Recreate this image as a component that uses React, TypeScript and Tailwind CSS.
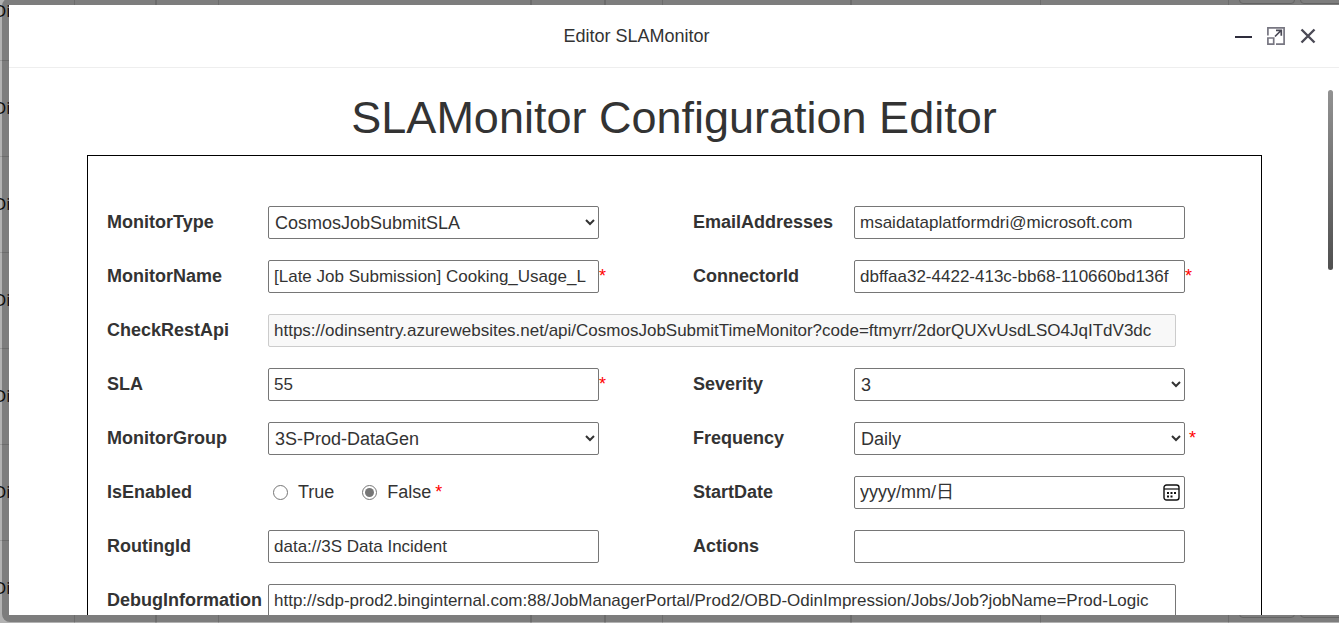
import { useState } from 'react';
import type { ReactNode } from 'react';
import clsx from 'clsx';

const columns = [
  'w-[74px] border-r',
  'w-[82px] border-r-2',
  'w-[62px] border-r',
  'w-[313px] border-r-2',
  'w-[74px] border-r-2',
  'w-[57px] border-r',
  'w-[189px] border-r-2',
  'w-[189px] border-r',
  'w-[188px] border-r',
];

const rows = [1, 2, 3, 4, 5, 6, 7];

const control = 'h-[33px] w-full min-w-0 rounded-[2px] border text-[#333]';

type FieldProps = {
  id: string;
  required?: boolean;
  spaced?: boolean;
  wide?: boolean;
  children: ReactNode;
};

const Field = ({ id, required, spaced, wide, children }: FieldProps) => (
  <div className={clsx('flex h-[33px] items-center pl-[19px]', wide && 'col-span-2')}>
    <label htmlFor={id} className="w-[161px] shrink-0 font-bold">
      {id}
    </label>
    <div className="relative flex min-w-0 flex-1 items-center">{children}</div>
    <span
      className={clsx('shrink-0 text-[#f00]', wide ? 'w-[84px]' : 'w-[75px]', spaced && 'pl-1')}
    >
      {required && '*'}
    </span>
  </div>
);

type TextProps = { id: string; value: string; disabled?: boolean };

const TextBox = ({ id, value, disabled }: TextProps) => (
  <input
    id={id}
    type="text"
    defaultValue={value}
    disabled={disabled}
    className={clsx(
      control,
      'px-[5px] text-[17px]',
      disabled ? 'border-[#ccc] bg-[#f8f8f8]' : 'border-[#767676] bg-white'
    )}
  />
);

const Select = ({ id, value }: TextProps) => (
  <select
    id={id}
    defaultValue={value}
    className={clsx(control, 'border-[#767676] bg-white px-[2px] text-[18px]')}
  >
    <option>{value}</option>
  </select>
);

const JobTable = () => (
  <table className="-mt-9 w-full min-w-[1339px] table-fixed border-collapse bg-white text-[#111]">
    <tbody>
      {rows.map((row) => (
        <tr key={row} className="h-24 border-b border-[#ddd]">
          {columns.map((column, i) => (
            <td key={i} className={clsx(column, 'overflow-hidden border-[#ddd]')}>
              {i === 0 && <span className="-ml-[6px] font-['Open_Sans',sans-serif] text-[17px]">Di</span>}
            </td>
          ))}
          <td className="pt-2 pl-[10px] align-top">
            <div className="grid grid-cols-[56px_56px] gap-x-[5px] gap-y-[5px]">
              {[1, 2, 3, 4].map((n) => (
                <span key={n} className="h-8 rounded border border-[#ccc]" />
              ))}
            </div>
          </td>
        </tr>
      ))}
    </tbody>
  </table>
);

const App = () => {
  const [enabled, setEnabled] = useState('False');

  return (
    <main className="h-screen overflow-hidden font-['Liberation_Sans',Arial,'Noto_Sans_CJK_SC',sans-serif] text-[18px] text-[#333]">
      <JobTable />
      <div className="fixed inset-0 bg-black/30" />

      <div
        role="dialog"
        aria-label="Editor SLAMonitor"
        className="fixed -top-[2px] bottom-px left-[2px] -right-[7px] flex flex-col rounded-lg bg-black/30 p-[7px]"
      >
        <header className="flex h-[63px] shrink-0 items-center border-b border-[#eee] bg-white pr-[22px] pl-[30px]">
          <h2 className="flex-1 text-center">Editor SLAMonitor</h2>
          <div className="flex items-center gap-[14px] text-[#2e2d3c]">
            <button type="button" aria-label="Minimize">
              <svg width="19" height="20" viewBox="0 0 19 20" className="block">
                <path d="M1 11h17" stroke="currentColor" strokeWidth="2" />
              </svg>
            </button>
            <button type="button" aria-label="Maximize">
              <svg width="18" height="20" viewBox="0 0 18 20" fill="none" className="block">
                <g stroke="#777681" strokeWidth="1.7">
                  <path d="M.9 9.5V1.9h16.2v16.2H9" />
                  <path d="M.9 12h5.8v6.1H.9z" />
                </g>
                <path d="M8 10.5l6-6M9 4.4h5.3v5.3" stroke="#4a4956" strokeWidth="1.7" />
              </svg>
            </button>
            <button type="button" aria-label="Close">
              <svg width="18" height="20" viewBox="0 0 18 20" fill="none" className="block">
                <path d="M2.5 3.5l13 13M15.5 3.5l-13 13" stroke="#4b4a56" strokeWidth="2.4" />
              </svg>
            </button>
          </div>
        </header>

        <div className="relative min-h-0 flex-1 bg-white">
          <div className="h-full overflow-y-auto [scrollbar-width:none]">
            <h1 className="pt-[25px] pb-[12px] text-center text-[45px] leading-[50px]">
              SLAMonitor Configuration Editor
            </h1>
            <form className="mr-[77px] ml-[78px] grid grid-cols-2 gap-y-[21px] border border-black pt-[50px] pr-px pb-12">
              <Field id="MonitorType">
                <Select id="MonitorType" value="CosmosJobSubmitSLA" />
              </Field>
              <Field id="EmailAddresses">
                <TextBox id="EmailAddresses" value="msaidataplatformdri@microsoft.com" />
              </Field>
              <Field id="MonitorName" required>
                <TextBox id="MonitorName" value="[Late Job Submission] Cooking_Usage_L" />
              </Field>
              <Field id="ConnectorId" required>
                <TextBox id="ConnectorId" value="dbffaa32-4422-413c-bb68-110660bd136f" />
              </Field>
              <Field id="CheckRestApi" wide>
                <TextBox
                  id="CheckRestApi"
                  value="https://odinsentry.azurewebsites.net/api/CosmosJobSubmitTimeMonitor?code=ftmyrr/2dorQUXvUsdLSO4JqITdV3dc"
                  disabled
                />
              </Field>
              <Field id="SLA" required>
                <TextBox id="SLA" value="55" />
              </Field>
              <Field id="Severity">
                <Select id="Severity" value="3" />
              </Field>
              <Field id="MonitorGroup">
                <Select id="MonitorGroup" value="3S-Prod-DataGen" />
              </Field>
              <Field id="Frequency" required spaced>
                <Select id="Frequency" value="Daily" />
              </Field>
              <Field id="IsEnabled">
                <div id="IsEnabled" role="radiogroup" className="flex items-center pl-[5px]">
                  {['True', 'False'].map((option) => (
                    <label key={option} className="mr-7 flex items-center gap-[10px] last-of-type:mr-1">
                      <input
                        type="radio"
                        name="enabled"
                        value={option}
                        checked={enabled === option}
                        onChange={() => setEnabled(option)}
                        className="size-[15px] accent-[#767676]"
                      />
                      {option}
                    </label>
                  ))}
                  <span className="text-[#f00]">*</span>
                </div>
              </Field>
              <Field id="StartDate">
                <input
                  id="StartDate"
                  type="text"
                  placeholder="yyyy/mm/日"
                  className={clsx(control, 'border-[#767676] bg-white px-[5px] text-[18px] placeholder:text-[#333]')}
                />
                <button type="button" aria-label="Pick a date" className="absolute right-[5px]">
                  <svg width="17" height="17" viewBox="0 0 17 17" fill="none" className="block">
                    <rect x="1" y="1" width="15" height="15" rx="2.5" stroke="#111" strokeWidth="1.4" />
                    <path d="M1 5h15" stroke="#111" strokeWidth="1.2" />
                    <path
                      d="M4 8h2v2H4zM7.5 8h2v2h-2zM11 8h2v2h-2zM4 11.5h2v2H4zM7.5 11.5h2v2h-2z"
                      fill="#111"
                    />
                  </svg>
                </button>
              </Field>
              <Field id="RoutingId">
                <TextBox id="RoutingId" value="data://3S Data Incident" />
              </Field>
              <Field id="Actions">
                <TextBox id="Actions" value="" />
              </Field>
              <Field id="DebugInformation" wide>
                <TextBox
                  id="DebugInformation"
                  value="http://sdp-prod2.binginternal.com:88/JobManagerPortal/Prod2/OBD-OdinImpression/Jobs/Job?jobName=Prod-Logic"
                />
              </Field>
            </form>
          </div>
          <div className="absolute top-[22px] right-[6px] h-[180px] w-[5px] rounded-full bg-linear-to-b from-[#929292] to-[#505050]" />
        </div>
      </div>
    </main>
  );
};

export default App;
